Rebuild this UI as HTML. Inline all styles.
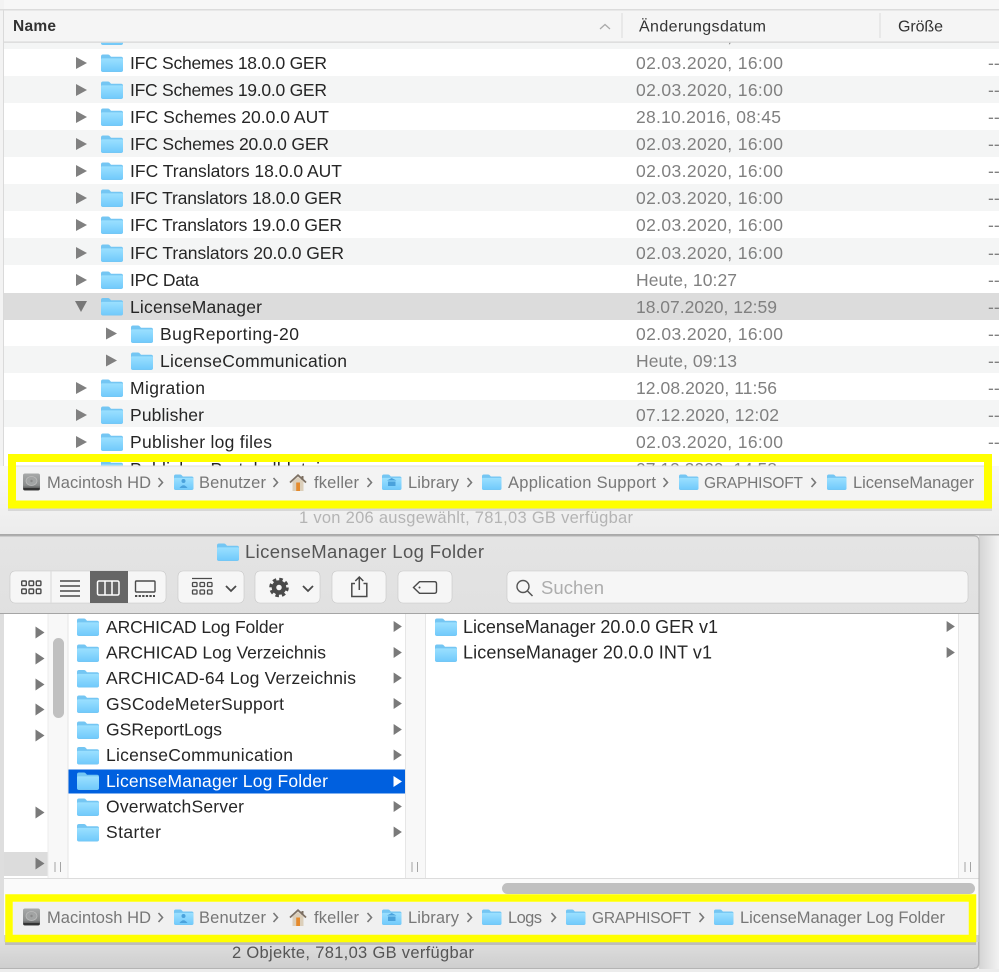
<!DOCTYPE html>
<html><head><meta charset="utf-8"><title>Finder</title>
<style>
html,body{margin:0;padding:0;background:#f2f2f2;width:999px;height:972px;overflow:hidden}
svg{display:block;position:absolute;left:0;top:0;filter:blur(.3px)}
text{font-family:"Liberation Sans",sans-serif}
.n{font-size:17.5px;fill:#262626}
.m{font-size:18px;fill:#262626}
.d{font-size:17.5px;fill:#808080}
.h{font-size:16px;fill:#333}
.b{font-size:16.5px;fill:#777}
.g{font-size:15.5px;fill:#777}
.c{fill:none;stroke:#777;stroke-width:1.6}
.btn{fill:#f6f6f6;stroke:#c6c6c6;stroke-width:.6}
.ic{fill:none;stroke:#4a4a4a;stroke-width:1.5}
</style></head><body>
<svg width="999" height="972" viewBox="0 0 999 972" xmlns="http://www.w3.org/2000/svg">
<defs>
<linearGradient id="fg" x1="0" y1="0" x2="0" y2="1"><stop offset="0" stop-color="#9be0ff"/><stop offset="1" stop-color="#72cafb"/></linearGradient>
<linearGradient id="tb" x1="0" y1="0" x2="0" y2="1"><stop offset="0" stop-color="#e4e4e4"/><stop offset="1" stop-color="#d0d0d0"/></linearGradient>
<linearGradient id="st" x1="0" y1="0" x2="0" y2="1"><stop offset="0" stop-color="#dedede"/><stop offset="1" stop-color="#cecece"/></linearGradient>
<linearGradient id="st1" x1="0" y1="0" x2="0" y2="1"><stop offset="0" stop-color="#f8f8f8"/><stop offset="1" stop-color="#ececec"/></linearGradient>
<linearGradient id="sh" x1="0" y1="0" x2="1" y2="0"><stop offset="0" stop-color="#d4d4d4"/><stop offset="1" stop-color="#f2f2f2"/></linearGradient>
<linearGradient id="hd" x1="0" y1="0" x2="0" y2="1"><stop offset="0" stop-color="#a8aaaa"/><stop offset=".7" stop-color="#8a8c8c"/><stop offset="1" stop-color="#3c3c3c"/></linearGradient>
<symbol id="f" viewBox="0 0 22 18">
<path d="M0 2.5Q0 0.5 2 0.5H7Q8.2 0.5 9 1.6L10 2.8H20Q22 2.8 22 4.8V16Q22 18 20 18H2Q0 18 0 16Z" fill="#74c6f3"/>
<path d="M0 5.4Q0 4.4 1 4.4H21Q22 4.4 22 5.4V16Q22 17.2 20.8 17.2H1.2Q0 17.2 0 16Z" fill="url(#fg)"/>
</symbol>
<symbol id="ar" viewBox="0 0 11 12"><path d="M0 0L11 6L0 12Z" fill="#808080"/></symbol>
<symbol id="ar2" viewBox="0 0 9 12"><path d="M0 0L9 6L0 12Z" fill="#7a7a7a"/></symbol>
<symbol id="hdi" viewBox="0 0 18 18">
<rect x="0.5" y="0.5" width="17" height="17" rx="2" fill="url(#hd)"/>
<ellipse cx="9" cy="8" rx="5.5" ry="4.5" fill="#a2a4a4" stroke="#bdbdbd" stroke-width=".7"/>
<circle cx="9" cy="8" r="1.2" fill="#888"/>
<rect x="1" y="15" width="16" height="2" fill="#333"/>
</symbol>
<symbol id="home" viewBox="0 0 17 17">
<path d="M3 7.5V17H14V7.5L8.5 3Z" fill="#dccfba"/>
<path d="M0.5 8.5L8.5 1.2L16.5 8.5" fill="none" stroke="#7c6f62" stroke-width="1.7"/>
<rect x="12" y="2" width="2" height="4" fill="#7c6f62"/>
<rect x="6.7" y="8.5" width="3.8" height="8.5" fill="#e58a2c"/>
</symbol>
</defs>

<!-- upper window background -->
<rect x="0" y="0" width="999" height="535" fill="#fff"/>
<rect x="0" y="0" width="999" height="10" fill="#f7f7f7"/>
<rect x="0" y="0" width="4" height="535" fill="#f3f3f3"/>
<rect x="3" y="9" width="1" height="500" fill="#dadada"/>

<!-- zebra rows -->
<g fill="#f4f5f5">
<rect x="4" y="22" width="995" height="27"/>
<rect x="4" y="76" width="995" height="27"/>
<rect x="4" y="130" width="995" height="27"/>
<rect x="4" y="184" width="995" height="27"/>
<rect x="4" y="238" width="995" height="27"/>
<rect x="4" y="346" width="995" height="27"/>
<rect x="4" y="400" width="995" height="27"/>
</g>
<rect x="4" y="293" width="995" height="27" fill="#dcdcdc"/>

<!-- clipped top row -->
<use href="#f" x="101" y="27" width="22" height="18"/>
<text class="d" x="636" y="42" textLength="147">02.03.2020, 16:00</text>

<!-- header -->
<rect x="0" y="9" width="999" height="1.5" fill="#dcdcdc"/>
<rect x="4" y="10.5" width="995" height="31" fill="#f5f5f5"/>
<rect x="4" y="41.5" width="995" height="1.3" fill="#d8d8d8"/>
<rect x="0" y="10.5" width="3" height="32" fill="#f3f3f3"/>
<text x="13" y="31" textLength="43" style="font-weight:700;font-size:15.5px;fill:#333">Name</text>
<path d="M600 29L605 24.5L610 29" fill="none" stroke="#aaa" stroke-width="1.3"/>
<rect x="621.5" y="13" width="1" height="25" fill="#dcdcdc"/>
<rect x="879.5" y="13" width="1" height="25" fill="#dcdcdc"/>
<text class="h" x="639" y="31.5" textLength="127">Änderungsdatum</text>
<text class="h" x="898" y="31.5" textLength="45">Größe</text>

<!-- list rows -->
<g>
<use href="#ar" x="76" y="57" width="11" height="12"/><use href="#f" x="101" y="54" width="22" height="18"/><text class="n" x="130" y="69" textLength="197">IFC Schemes 18.0.0 GER</text><text class="d" x="636" y="69" textLength="147">02.03.2020, 16:00</text>
<use href="#ar" x="76" y="84" width="11" height="12"/><use href="#f" x="101" y="81" width="22" height="18"/><text class="n" x="130" y="96" textLength="197">IFC Schemes 19.0.0 GER</text><text class="d" x="636" y="96" textLength="147">02.03.2020, 16:00</text>
<use href="#ar" x="76" y="111" width="11" height="12"/><use href="#f" x="101" y="108" width="22" height="18"/><text class="n" x="130" y="123" textLength="199">IFC Schemes 20.0.0 AUT</text><text class="d" x="636" y="123" textLength="145">28.10.2016, 08:45</text>
<use href="#ar" x="76" y="138" width="11" height="12"/><use href="#f" x="101" y="135" width="22" height="18"/><text class="n" x="130" y="150" textLength="199">IFC Schemes 20.0.0 GER</text><text class="d" x="636" y="150" textLength="147">02.03.2020, 16:00</text>
<use href="#ar" x="76" y="165" width="11" height="12"/><use href="#f" x="101" y="162" width="22" height="18"/><text class="n" x="130" y="177" textLength="212">IFC Translators 18.0.0 AUT</text><text class="d" x="636" y="177" textLength="147">02.03.2020, 16:00</text>
<use href="#ar" x="76" y="192" width="11" height="12"/><use href="#f" x="101" y="189" width="22" height="18"/><text class="n" x="130" y="204" textLength="212">IFC Translators 18.0.0 GER</text><text class="d" x="636" y="204" textLength="147">02.03.2020, 16:00</text>
<use href="#ar" x="76" y="219" width="11" height="12"/><use href="#f" x="101" y="216" width="22" height="18"/><text class="n" x="130" y="231" textLength="212">IFC Translators 19.0.0 GER</text><text class="d" x="636" y="231" textLength="147">02.03.2020, 16:00</text>
<g transform="translate(0,1)">
<use href="#ar" x="76" y="246" width="11" height="12"/><use href="#f" x="101" y="243" width="22" height="18"/><text class="n" x="130" y="258" textLength="214">IFC Translators 20.0.0 GER</text><text class="d" x="636" y="258" textLength="147">02.03.2020, 16:00</text>
<use href="#ar" x="76" y="273" width="11" height="12"/><use href="#f" x="101" y="270" width="22" height="18"/><text class="n" x="130" y="285" textLength="69">IPC Data</text><text class="d" x="636" y="285" textLength="101">Heute, 10:27</text>
</g>
<path d="M75 301H87L81 312Z" fill="#777"/><use href="#f" x="101" y="297.5" width="22" height="18"/><text class="n" x="130" y="313" textLength="132">LicenseManager</text><text class="d" x="636" y="313" textLength="141">18.07.2020, 12:59</text>
<use href="#ar" x="106" y="327.5" width="11" height="12"/><use href="#f" x="131" y="325" width="22" height="18"/><text class="n" x="160" y="340" textLength="139">BugReporting-20</text><text class="d" x="636" y="340" textLength="147">02.03.2020, 16:00</text>
<use href="#ar" x="106" y="354.5" width="11" height="12"/><use href="#f" x="131" y="352" width="22" height="18"/><text class="n" x="160" y="367" textLength="187">LicenseCommunication</text><text class="d" x="636" y="367" textLength="101">Heute, 09:13</text>
<g transform="translate(0,1)">
<use href="#ar" x="76" y="381" width="11" height="12"/><use href="#f" x="101" y="378" width="22" height="18"/><text class="n" x="130" y="393" textLength="75">Migration</text><text class="d" x="636" y="393" textLength="141">12.08.2020, 11:56</text>
<use href="#ar" x="76" y="408" width="11" height="12"/><use href="#f" x="101" y="405" width="22" height="18"/><text class="n" x="130" y="420" textLength="74">Publisher</text><text class="d" x="636" y="420" textLength="143">07.12.2020, 12:02</text>
<use href="#ar" x="76" y="435" width="11" height="12"/><use href="#f" x="101" y="432" width="22" height="18"/><text class="n" x="130" y="447" textLength="142">Publisher log files</text><text class="d" x="636" y="447" textLength="147">02.03.2020, 16:00</text>
<use href="#f" x="101" y="459" width="22" height="18"/><text class="n" x="130" y="474" textLength="190">Publisher Protokolldatei</text><text class="d" x="636" y="474" textLength="141">07.12.2020, 14:58</text>
</g>
</g>
<g>
<text class="d" x="988" y="69">--</text><text class="d" x="988" y="96">--</text><text class="d" x="988" y="123">--</text><text class="d" x="988" y="150">--</text><text class="d" x="988" y="177">--</text><text class="d" x="988" y="204">--</text><text class="d" x="988" y="231">--</text><text class="d" x="988" y="259">--</text><text class="d" x="988" y="286">--</text><text class="d" x="988" y="313">--</text><text class="d" x="988" y="340">--</text><text class="d" x="988" y="367">--</text><text class="d" x="988" y="394">--</text><text class="d" x="988" y="421">--</text><text class="d" x="988" y="448">--</text>
</g>

<!-- status upper -->
<rect x="0" y="466" width="999" height="68" fill="url(#st1)"/>
<text x="299" y="523" textLength="334" style="font-size:16.5px;fill:#b4b4b4">1 von 206 ausgewählt, 781,03 GB verfügbar</text>
<rect x="0" y="534" width="999" height="1.5" fill="#a9a9a9"/>

<!-- breadcrumb 1 -->
<rect x="8" y="508" width="984" height="3" fill="#000" opacity=".1"/>
<rect x="16" y="466" width="968" height="35" fill="#f3f3f3"/>
<rect x="16" y="465.5" width="968" height="1" fill="#dcdcdc"/>
<g>
<use href="#hdi" x="22.5" y="473" width="18" height="18"/><text class="b" x="47" y="488" textLength="104">Macintosh HD</text>
<path class="c" d="M158.5 478L162.5 482.5L158.5 487"/>
<use href="#f" x="174" y="474" width="19.5" height="16"/><circle cx="183.5" cy="481" r="2" fill="#4aa2dc"/><path d="M179.5 488Q183.5 482.5 187.5 488Z" fill="#4aa2dc"/><text class="b" x="199" y="488" textLength="67">Benutzer</text>
<path class="c" d="M273.5 478L277.5 482.5L273.5 487"/>
<use href="#home" x="289.5" y="474" width="17" height="17"/><text class="b" x="314" y="488" textLength="45">fkeller</text>
<path class="c" d="M367.5 478L371.5 482.5L367.5 487"/>
<use href="#f" x="382" y="474" width="19.5" height="16"/><path d="M387 480.5L391.7 478L396.500 480.500ZM388 481.500H395.500V486H388Z" fill="#4aa2dc"/><text class="b" x="408" y="488" textLength="51">Library</text>
<path class="c" d="M467.500 478L471.500 482.500L467.500 487"/>
<use href="#f" x="482" y="474" width="19.500" height="16"/><text class="b" x="508" y="488" textLength="148">Application Support</text>
<path class="c" d="M663.500 478L667.500 482.500L663.500 487"/>
<use href="#f" x="679" y="474" width="19.500" height="16"/><text class="g" x="704" y="488" textLength="99">GRAPHISOFT</text>
<path class="c" d="M811.500 478L815.500 482.500L811.500 487"/>
<use href="#f" x="827" y="474" width="19.500" height="16"/><text class="b" x="853" y="488" textLength="121">LicenseManager</text>
</g>
<path d="M12 458H988V504.500H12Z" fill="none" stroke="#ffff00" stroke-width="8"/>

<!-- lower window -->
<rect x="979" y="535.500" width="20" height="436.500" fill="url(#sh)"/>
<rect x="0" y="969" width="999" height="3" fill="#ececec"/>
<path d="M-2 536H974Q979 536 979 541V963Q979 968.500 974 968.500H-2Z" fill="url(#tb)" stroke="#b4b4b4" stroke-width="1"/>
<rect x="0" y="942" width="978.500" height="26" fill="url(#st)"/>
<path d="M978.500 942V963Q978.500 968 974 968" fill="none" stroke="#b4b4b4"/>
<use href="#f" x="217" y="543" width="22" height="18"/>
<text x="245" y="558" textLength="239" style="font-size:18.5px;fill:#555">LicenseManager Log Folder</text>

<!-- toolbar -->
<rect class="btn" x="10" y="571" width="156" height="32" rx="5"/>
<rect x="50.500" y="571.500" width="1" height="31" fill="#d8d8d8"/>
<rect x="90" y="571" width="38" height="32" fill="#666"/>
<g fill="none" stroke="#4a4a4a" stroke-width="1.400">
<rect x="21.700" y="581" width="4.600" height="4.600" rx="1"/><rect x="29" y="581" width="4.600" height="4.600" rx="1"/><rect x="36.300" y="581" width="4.600" height="4.600" rx="1"/>
<rect x="21.700" y="589" width="4.600" height="4.600" rx="1"/><rect x="29" y="589" width="4.600" height="4.600" rx="1"/><rect x="36.300" y="589" width="4.600" height="4.600" rx="1"/>
<path d="M60 581H80M60 586H80M60 591H80M60 596H80"/>
</g>
<g fill="none" stroke="#fff" stroke-width="1.500"><rect x="97.500" y="581" width="21.500" height="14" rx="1.500"/><path d="M105 581V595M112 581V595"/></g>
<g fill="none" stroke="#4a4a4a" stroke-width="1.400"><rect x="135.500" y="581" width="19.500" height="11" rx="1"/><path d="M135 596H155" stroke-dasharray="2.300 1.300" stroke-width="2"/></g>

<rect class="btn" x="178" y="571" width="66" height="32" rx="5"/>
<g fill="none" stroke="#4a4a4a" stroke-width="1.300">
<path d="M192 578.500H212"/>
<rect x="192.500" y="582.500" width="4.500" height="4" rx=".8"/><rect x="200" y="582.500" width="4.500" height="4" rx=".8"/><rect x="207.500" y="582.500" width="4.500" height="4" rx=".8"/>
<rect x="192.500" y="590" width="4.500" height="4" rx=".8"/><rect x="200" y="590" width="4.500" height="4" rx=".8"/><rect x="207.500" y="590" width="4.500" height="4" rx=".8"/>
<path stroke-width="1.800" d="M226 586L231 591L236 586"/>
</g>

<rect class="btn" x="255" y="571" width="65" height="32" rx="5"/>
<circle cx="279" cy="587.500" r="5" fill="none" stroke="#4a4a4a" stroke-width="4.500"/>
<circle cx="279" cy="587.500" r="8.300" fill="none" stroke="#4a4a4a" stroke-width="3" stroke-dasharray="3.500 3.020"/>
<path d="M303 586L308 591L313 586" fill="none" stroke="#4a4a4a" stroke-width="1.800"/>

<rect class="btn" x="332" y="571" width="54" height="32" rx="5"/>
<path class="ic" d="M355 583.500H351.800V596.500H366.800V583.500H363.500M359.300 590V577.500M355.300 581L359.300 577L363.300 581"/>

<rect class="btn" x="398" y="571" width="54" height="32" rx="5"/>
<path d="M413.500 587.500L419.500 581.700H434.500Q436.500 581.700 436.500 583.700V591.300Q436.500 593.300 434.500 593.300H419.500Z" fill="none" stroke="#4a4a4a" stroke-width="1.400"/>
<circle cx="419.500" cy="587.500" r="1" fill="#4a4a4a"/>

<rect class="btn" x="507" y="571" width="461" height="32" rx="5"/>
<circle cx="523" cy="586.500" r="6" fill="none" stroke="#555" stroke-width="1.400"/>
<path d="M527.500 591L532.500 596" stroke="#555" stroke-width="1.500"/>
<text x="541" y="594" textLength="63" style="font-size:18.5px;fill:#adadad">Suchen</text>

<!-- columns -->
<rect x="0" y="613" width="979" height="1" fill="#a5a5a5"/>
<rect x="4" y="614" width="974.500" height="264" fill="#fff"/>
<rect x="0" y="614" width="4" height="328" fill="#dedede"/>
<rect x="48" y="614" width="20" height="264" fill="#f8f8f8"/>
<rect x="47.500" y="614" width="1" height="264" fill="#ececec"/>
<rect x="67.500" y="614" width="1" height="264" fill="#e6e6e6"/>
<rect x="53" y="638" width="11" height="80" rx="5.500" fill="#c0c0c0"/>
<rect x="405" y="614" width="20.500" height="264" fill="#f8f8f8"/>
<rect x="405" y="614" width="1" height="264" fill="#e6e6e6"/>
<rect x="425" y="614" width="1" height="264" fill="#e6e6e6"/>
<rect x="958" y="614" width="20.500" height="264" fill="#f8f8f8"/>
<rect x="958" y="614" width="1" height="264" fill="#e6e6e6"/>
<rect x="4" y="852" width="43.500" height="24" fill="#dcdcdc"/>
<g fill="#a4a4a4">
<rect x="54.500" y="862" width="1" height="10"/><rect x="60" y="862" width="1" height="10"/>
<rect x="411.500" y="862" width="1" height="10"/><rect x="417" y="862" width="1" height="10"/>
<rect x="964.500" y="862" width="1" height="10"/><rect x="970" y="862" width="1" height="10"/>
</g>
<g>
<use href="#ar2" x="35.500" y="626.500" width="9" height="12"/>
<use href="#ar2" x="35.500" y="652.500" width="9" height="12"/>
<use href="#ar2" x="35.500" y="678.500" width="9" height="12"/>
<use href="#ar2" x="35.500" y="703.500" width="9" height="12"/>
<use href="#ar2" x="35.500" y="729.500" width="9" height="12"/>
<use href="#ar2" x="35.500" y="806.500" width="9" height="12"/>
<use href="#ar2" x="35.500" y="857.500" width="9" height="12"/>
</g>

<rect x="68.500" y="769.500" width="336.500" height="24" fill="#0060df"/>
<g>
<use href="#f" x="77" y="618" width="22" height="18"/><text class="n" x="106" y="633" textLength="178">ARCHICAD Log Folder</text><use href="#ar2" x="393.500" y="621" width="8.500" height="11"/>
<use href="#f" x="77" y="644" width="22" height="18"/><text class="n" x="106" y="658.500" textLength="220">ARCHICAD Log Verzeichnis</text><use href="#ar2" x="393.500" y="647" width="8.500" height="11"/>
<use href="#f" x="77" y="669.500" width="22" height="18"/><text class="n" x="106" y="684" textLength="250">ARCHICAD-64 Log Verzeichnis</text><use href="#ar2" x="393.500" y="672.500" width="8.500" height="11"/>
<use href="#f" x="77" y="695" width="22" height="18"/><text class="n" x="106" y="710" textLength="178">GSCodeMeterSupport</text><use href="#ar2" x="393.500" y="698" width="8.500" height="11"/>
<use href="#f" x="77" y="721" width="22" height="18"/><text class="n" x="106" y="735.500" textLength="116">GSReportLogs</text><use href="#ar2" x="393.500" y="724" width="8.500" height="11"/>
<use href="#f" x="77" y="746.500" width="22" height="18"/><text class="n" x="106" y="761" textLength="187">LicenseCommunication</text><use href="#ar2" x="393.500" y="749.500" width="8.500" height="11"/>
<use href="#f" x="77" y="772" width="22" height="18"/><text x="106" y="787" textLength="222" style="font-size:17.500px;fill:#fff">LicenseManager Log Folder</text><path d="M393.500 776L402 781.500L393.500 787Z" fill="#fff"/>
<use href="#f" x="77" y="798" width="22" height="18"/><text class="n" x="106" y="812.500" textLength="138">OverwatchServer</text><use href="#ar2" x="393.500" y="801" width="8.500" height="11"/>
<use href="#f" x="77" y="823.500" width="22" height="18"/><text class="n" x="106" y="838" textLength="55">Starter</text><use href="#ar2" x="393.500" y="826.500" width="8.500" height="11"/>
<use href="#f" x="435" y="618" width="22" height="18"/><text class="m" x="463" y="633" textLength="255">LicenseManager 20.0.0 GER v1</text><use href="#ar2" x="946.500" y="621" width="8.500" height="11"/>
<use href="#f" x="435" y="644" width="22" height="18"/><text class="m" x="463" y="658.500" textLength="249">LicenseManager 20.0.0 INT v1</text><use href="#ar2" x="946.500" y="647" width="8.500" height="11"/>
</g>

<!-- horizontal scroller -->
<rect x="4" y="878" width="974.500" height="1" fill="#dcdcdc"/>
<rect x="4" y="879" width="974.500" height="56" fill="#fafafa"/>
<rect x="502" y="883" width="473" height="11" rx="5.500" fill="#c0c0c0"/>

<!-- breadcrumb 2 -->
<rect x="5" y="942" width="971" height="3" fill="#000" opacity=".14"/>
<rect x="13" y="902" width="956" height="33" fill="#f0f0f0"/>
<g>
<use href="#hdi" x="22.500" y="908" width="18" height="18"/><text class="b" x="47" y="923" textLength="104">Macintosh HD</text>
<path class="c" d="M158.500 913L162.500 917.500L158.500 922"/>
<use href="#f" x="174" y="909" width="19.500" height="16"/><circle cx="183.500" cy="916" r="2" fill="#4aa2dc"/><path d="M179.500 923Q183.500 917.500 187.500 923Z" fill="#4aa2dc"/><text class="b" x="199" y="923" textLength="67">Benutzer</text>
<path class="c" d="M273.500 913L277.500 917.500L273.500 922"/>
<use href="#home" x="289.500" y="909" width="17" height="17"/><text class="b" x="314" y="923" textLength="45">fkeller</text>
<path class="c" d="M367.500 913L371.500 917.500L367.500 922"/>
<use href="#f" x="382" y="909" width="19.500" height="16"/><path d="M387 915.500L391.700 913L396.500 915.500ZM388 916.500H395.500V921H388Z" fill="#4aa2dc"/><text class="b" x="408" y="923" textLength="51">Library</text>
<path class="c" d="M467.500 913L471.500 917.500L467.500 922"/>
<use href="#f" x="482" y="909" width="19.500" height="16"/><text class="b" x="508" y="923" textLength="34">Logs</text>
<path class="c" d="M551.500 913L555.500 917.500L551.500 922"/>
<use href="#f" x="566" y="909" width="19.500" height="16"/><text class="g" x="592" y="923" textLength="99">GRAPHISOFT</text>
<path class="c" d="M699.500 913L703.500 917.500L699.500 922"/>
<use href="#f" x="714" y="909" width="19.500" height="16"/><text class="b" x="740" y="923" textLength="205">LicenseManager Log Folder</text>
</g>
<path d="M9 898H972.500V938.500H9Z" fill="none" stroke="#ffff00" stroke-width="7.500"/>

<text x="232" y="958" textLength="242" style="font-size:16.500px;fill:#555">2 Objekte, 781,03 GB verfügbar</text>
</svg>
</body></html>
